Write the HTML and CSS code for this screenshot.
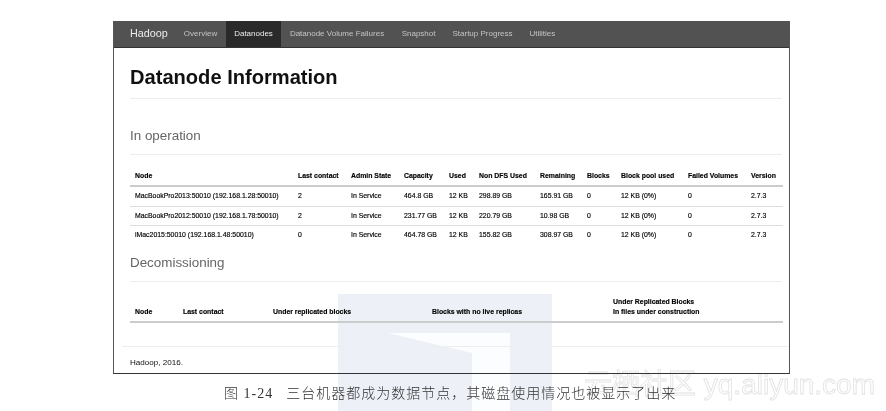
FILE: index.html
```html
<!DOCTYPE html>
<html lang="zh">
<head>
<meta charset="utf-8">
<title>Datanode Information</title>
<link rel="stylesheet" href="styles.css">
</head>
<body>
<div class="watermark" aria-hidden="true">
  <svg class="wm-art" width="214" height="117" viewBox="0 0 214 117">
    <rect width="214" height="117" fill="#edf0f6"/>
    <path d="M50 39 H172 V117 H134 V59 Z" fill="#fcfdfe"/>
  </svg>
</div>
<main class="window">
  <nav class="navbar">
    <span class="brand">Hadoop</span>
    <a class="nav-link">Overview</a>
    <a class="nav-link active">Datanodes</a>
    <a class="nav-link">Datanode Volume Failures</a>
    <a class="nav-link snapshot">Snapshot</a>
    <a class="nav-link">Startup Progress</a>
    <a class="nav-link">Utilities</a>
  </nav>
  <div class="content">
    <h1 class="title">Datanode Information</h1>
    <h2 class="section first">In operation</h2>
    <table class="grid ops">
      <colgroup>
        <col class="c1"><col class="c2"><col class="c3"><col class="c4"><col class="c5"><col class="c6"><col class="c7"><col class="c8"><col class="c9"><col class="c10"><col class="c11">
      </colgroup>
      <thead>
        <tr><th>Node</th><th>Last contact</th><th>Admin State</th><th>Capacity</th><th>Used</th><th>Non DFS Used</th><th>Remaining</th><th>Blocks</th><th>Block pool used</th><th>Failed Volumes</th><th>Version</th></tr>
      </thead>
      <tbody>
        <tr><td>MacBookPro2013:50010 (192.168.1.28:50010)</td><td>2</td><td>In Service</td><td>464.8 GB</td><td>12 KB</td><td>298.89 GB</td><td>165.91 GB</td><td>0</td><td>12 KB (0%)</td><td>0</td><td>2.7.3</td></tr>
        <tr><td>MacBookPro2012:50010 (192.168.1.78:50010)</td><td>2</td><td>In Service</td><td>231.77 GB</td><td>12 KB</td><td>220.79 GB</td><td>10.98 GB</td><td>0</td><td>12 KB (0%)</td><td>0</td><td>2.7.3</td></tr>
        <tr><td>iMac2015:50010 (192.168.1.48:50010)</td><td>0</td><td>In Service</td><td>464.78 GB</td><td>12 KB</td><td>155.82 GB</td><td>308.97 GB</td><td>0</td><td>12 KB (0%)</td><td>0</td><td>2.7.3</td></tr>
      </tbody>
    </table>
    <h2 class="section second">Decomissioning</h2>
    <table class="grid decom">
      <colgroup>
        <col class="d1"><col class="d2"><col class="d3"><col class="d4"><col class="d5">
      </colgroup>
      <thead>
        <tr><th>Node</th><th>Last contact</th><th>Under replicated blocks</th><th>Blocks with no live replicas</th><th>Under Replicated Blocks<br>In files under construction</th></tr>
      </thead>
    </table>
  </div>
  <footer class="footer">Hadoop, 2016.</footer>
</main>
<p class="caption"><span class="fig">图 1-24</span>三台机器都成为数据节点，其磁盘使用情况也被显示了出来</p>
<div class="site-mark" aria-hidden="true">云栖社区 yq.aliyun.com</div>
</body>
</html>
```
FILE: styles.css
```css
html, body {
  margin: 0;
  padding: 0;
  width: 886px;
  height: 411px;
  overflow: hidden;
  background: #fff;
}
body {
  position: relative;
  padding-top: 21px;
  box-sizing: border-box;
  font-family: "Liberation Sans", Arial, sans-serif;
  color: #222;
  filter: blur(0.45px);
}
.watermark {
  position: absolute;
  z-index: -1;
  left: 338px;
  top: 294px;
  width: 214px;
  height: 117px;
}
.wm-art { display: block; }
.window {
  position: relative;
  box-sizing: border-box;
  width: 677px;
  height: 353px;
  margin-left: 113px;
  border: 1px solid #555;
  border-top: 0;
  border-bottom-color: #333;
  display: flex;
  flex-direction: column;
}
.navbar {
  height: 27px;
  flex: none;
  box-sizing: border-box;
  background: #525252;
  border-bottom: 1px solid #333;
  display: flex;
  align-items: stretch;
  font-size: 8px;
  color: #c4c4c4;
  padding-left: 16px;
}
.brand {
  font-size: 10.8px;
  color: #ececec;
  align-self: center;
  margin: 0 7.5px 2px 0;
}
.nav-link {
  display: flex;
  align-items: center;
  padding: 0 8.5px 1px;
}
.nav-link.snapshot { margin-left: 0.5px; }
.nav-link.active {
  background: #2a2a2a;
  color: #ececec;
}
.content {
  flex: 1;
  padding: 0 7px 0 16px;
}
.title {
  margin: 0;
  height: 51px;
  box-sizing: border-box;
  padding-top: 16px;
  font-size: 20.1px;
  line-height: 26px;
  font-weight: 700;
  color: #111;
  border-bottom: 1px solid #eee;
}
.section {
  margin: 0;
  font-size: 13.4px;
  line-height: 18px;
  font-weight: 400;
  color: #666;
}
.section.first {
  padding-top: 28px;
  padding-bottom: 9px;
  border-bottom: 1px solid #eee;
}
.section.second {
  padding-top: 9px;
  padding-bottom: 9px;
  border-bottom: 1px solid #eee;
}
.grid {
  width: 100%;
  table-layout: fixed;
  border-collapse: collapse;
  font-size: 6.9px;
  color: #000;
  -webkit-text-stroke: 0.15px #000;
}
.grid th {
  text-align: left;
  vertical-align: bottom;
  font-weight: 700;
  padding: 0 0 4px 5px;
  line-height: 10px;
  border-bottom: 2px solid #ccc;
  white-space: nowrap;
}
.grid td {
  height: 17.5px;
  padding: 0 0 1px 5px;
  border-bottom: 1px solid #ddd;
  white-space: nowrap;
}
.grid tbody tr:last-child td { border-bottom: 0; }
.ops { margin-top: 16px; }
.decom { margin-top: 15px; }
.c1 { width: 163px; }
.c2 { width: 53px; }
.c3 { width: 53px; }
.c4 { width: 45px; }
.c5 { width: 30px; }
.c6 { width: 61px; }
.c7 { width: 47px; }
.c8 { width: 34px; }
.c9 { width: 67px; }
.c10 { width: 63px; }
.c11 { width: 37px; }
.d1 { width: 48px; }
.d2 { width: 90px; }
.d3 { width: 159px; }
.d4 { width: 181px; }
.d5 { width: 175px; }
.footer {
  flex: none;
  height: 27px;
  box-sizing: border-box;
  margin-left: 8px;
  border-top: 1px solid #eee;
  padding: 10px 0 0 8px;
  font-size: 8.1px;
  line-height: 12px;
  color: #111;
}
.caption {
  margin: 12px 0 0 224px;
  font-family: "Liberation Serif", "Noto Sans CJK SC", serif;
  font-size: 14px;
  font-weight: 300;
  letter-spacing: 1px;
  line-height: 16px;
  color: #333;
  white-space: nowrap;
}
.fig { margin-right: 13px; }
.site-mark {
  position: absolute;
  z-index: -1;
  left: 584px;
  top: 369px;
  font-family: "Liberation Sans", "Noto Sans CJK SC", sans-serif;
  font-size: 28px;
  line-height: 32px;
  color: #fff;
  -webkit-text-stroke: 0.8px #e2e2e2;
  white-space: nowrap;
}
```
